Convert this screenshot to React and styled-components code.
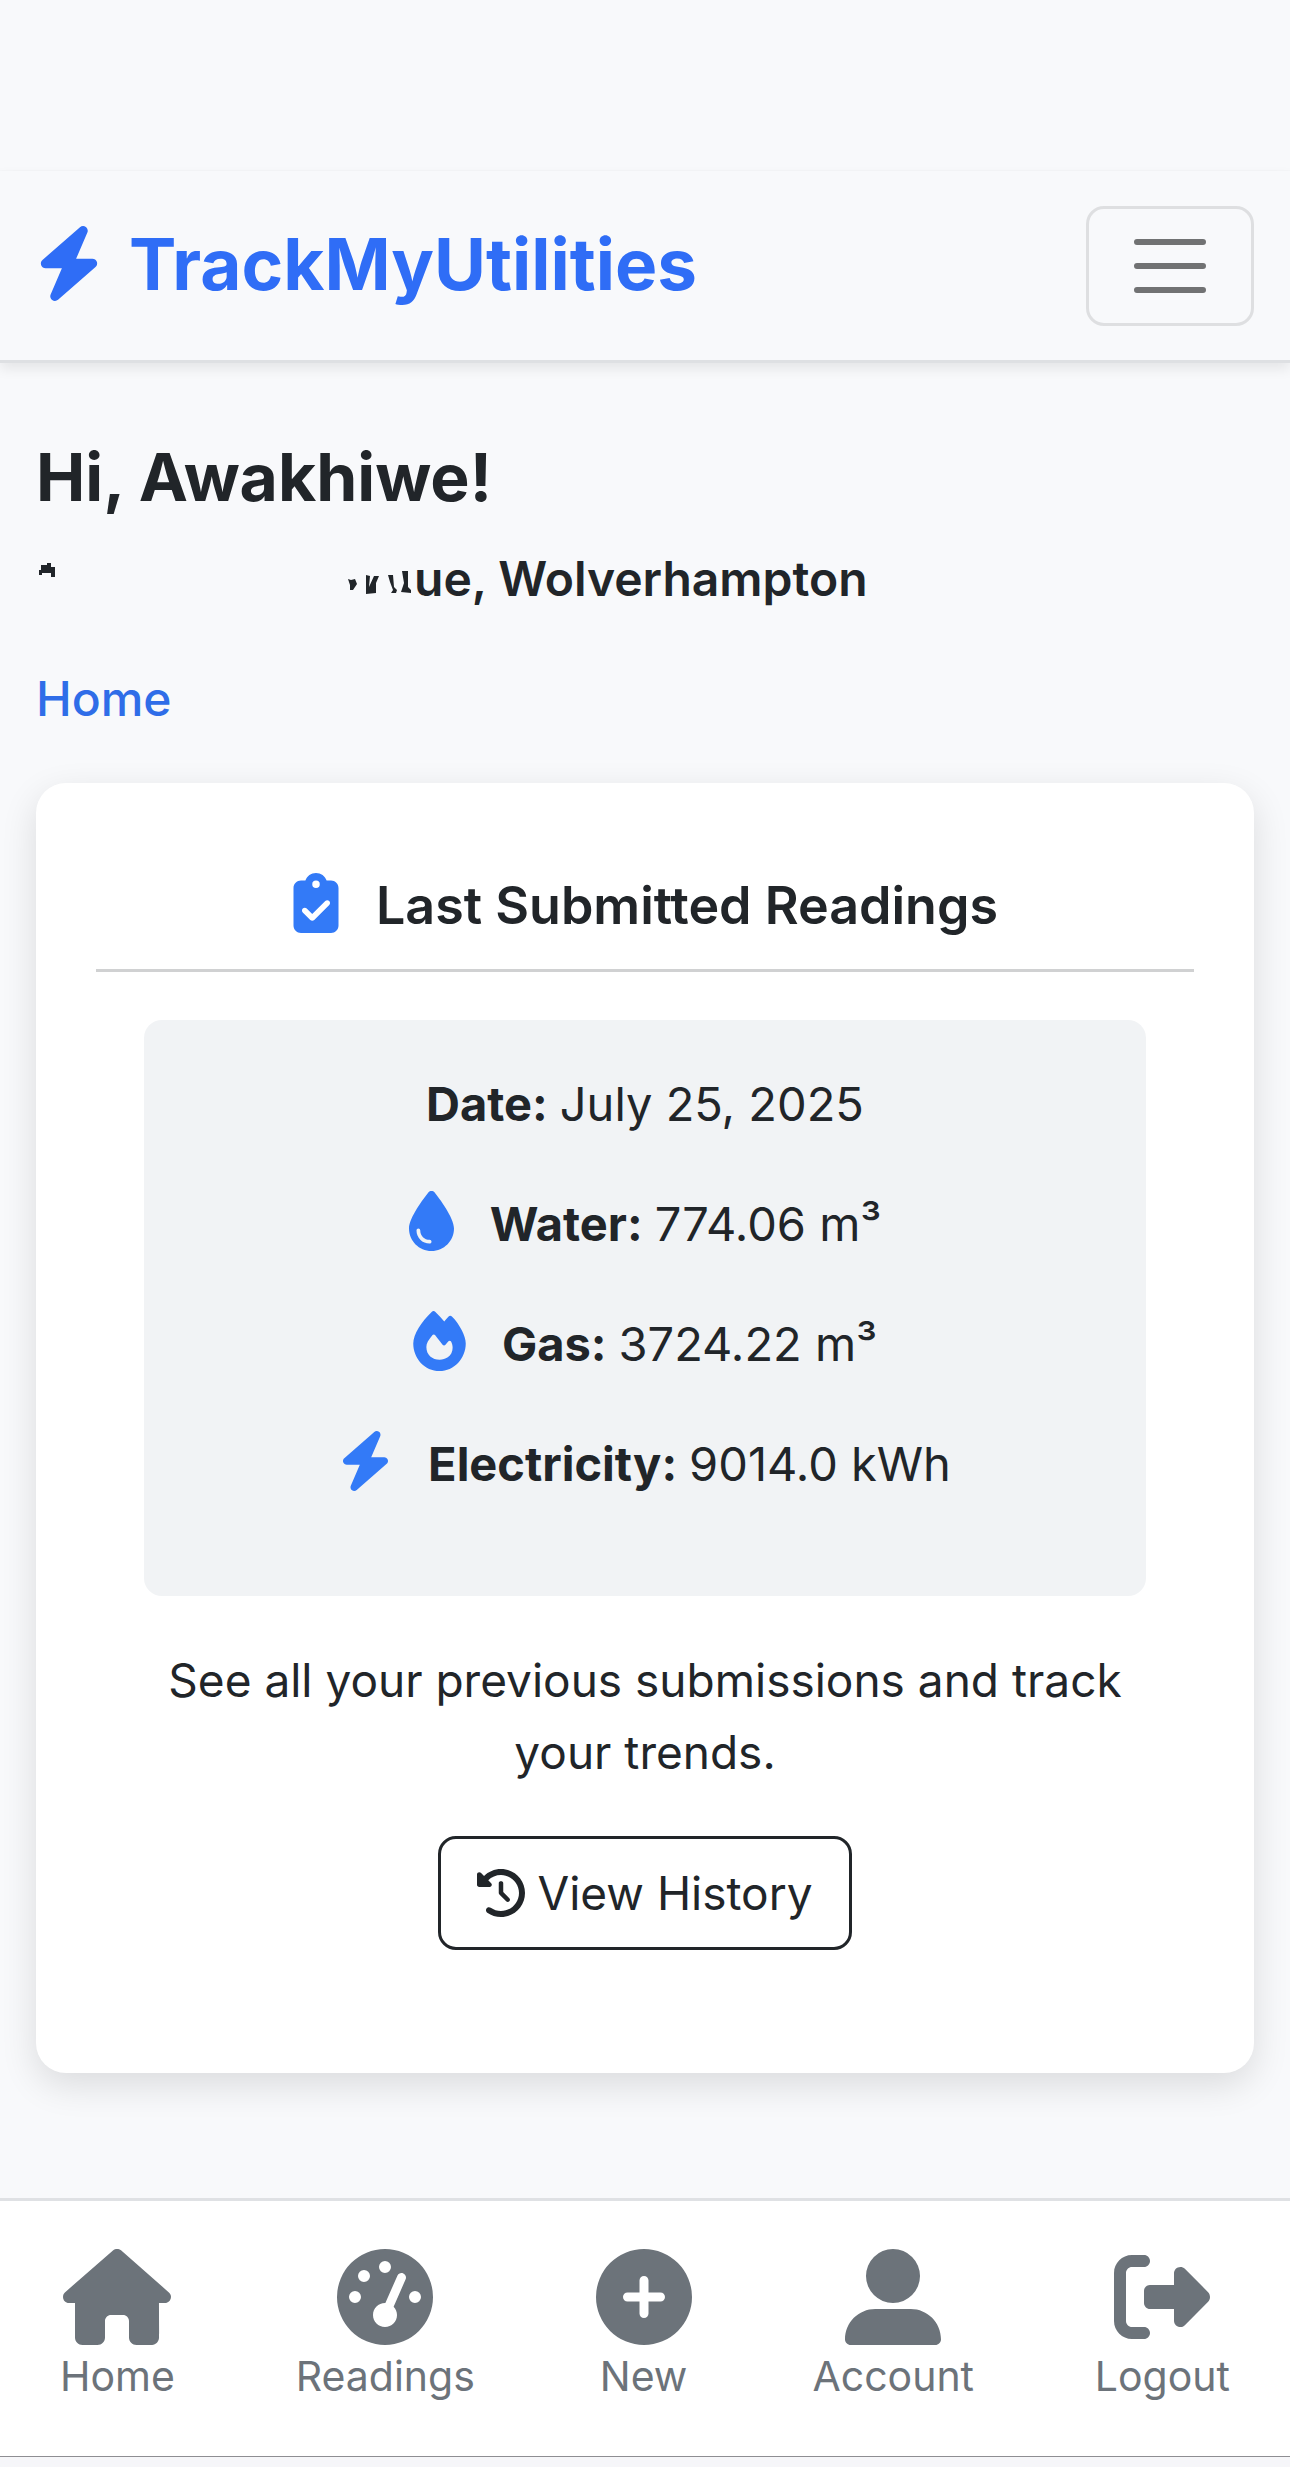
import React from "react"
import styled, {createGlobalStyle, css} from "styled-components"
import {
    FaBolt,
    FaCirclePlus,
    FaClipboardCheck,
    FaClockRotateLeft,
    FaDroplet,
    FaFire,
    FaGaugeHigh,
    FaHouse,
    FaRightFromBracket,
    FaUserLarge
} from "react-icons/fa6"

const GlobalStyle = createGlobalStyle`
    * {
        box-sizing: border-box;
    }

    body {
        margin: 0;
        background: #f8f9fb;
        color: #212529;
        font-family: Inter, "Liberation Sans", sans-serif;
        font-size: 46px;
        line-height: 72px;
    }
`

const Page = styled.div`
    display: flex;
    flex-direction: column;
    min-height: 100vh;
`

const StatusBar = styled.div`
    height: 171px;
    border-bottom: 1px solid #f5f6f8;
`

const TopBar = styled.header`
    display: flex;
    align-items: center;
    justify-content: space-between;
    height: 192px;
    padding: 0 36px;
    background: #f8f9fb;
    border-bottom: 3px solid #dee0e3;
    box-shadow: 0 6px 12px rgba(0, 0, 0, 0.08);
`

const Brand = styled.a`
    display: flex;
    align-items: center;
    gap: 27px;
    padding-bottom: 4px;
    color: #2f6df6;
    font-size: 71px;
    font-weight: 700;
    text-decoration: none;
`

const BrandIcon = styled(FaBolt)`
    width: 66px;
    height: 75px;
`

const MenuButton = styled.button`
    display: flex;
    align-items: center;
    justify-content: center;
    width: 168px;
    height: 120px;
    padding: 0;
    background: none;
    border: 3px solid #dedfe1;
    border-radius: 18px;
`

const MenuIcon = styled.svg`
    width: 90px;
    height: 90px;
    stroke: #717273;
    stroke-width: 2;
    stroke-linecap: round;
`

const Main = styled.main`
    padding: 72px 36px 125px;
`

const Greeting = styled.h1`
    margin: 0;
    font-size: 66px;
    font-weight: 700;
    line-height: 84px;
`

const Address = styled.p`
    display: flex;
    align-items: center;
    margin: 24px 0 48px;
    font-size: 48px;
    font-weight: 600;
`

const AddressMask = styled.svg`
    flex: none;
    width: 378px;
    height: 72px;
    fill: #212529;
`

const Crumb = styled.a`
    display: inline-block;
    color: #2f6de8;
    font-size: 48px;
    font-weight: 500;
    text-decoration: none;
`

const Card = styled.section`
    margin-top: 48px;
    padding: 87px 60px 123px;
    background: #fff;
    border-radius: 30px;
    box-shadow: 0 12px 36px rgba(0, 0, 0, 0.12);
    text-align: center;
`

const CardTitle = styled.h2`
    display: flex;
    align-items: center;
    justify-content: center;
    gap: 36px;
    margin: 0 0 48px;
    padding-bottom: 27px;
    border-bottom: 3px solid #d0d1d2;
    font-size: 52px;
    font-weight: 600;
`

const blueIcon = css`
    flex: none;
    height: 60px;
    margin-bottom: 6px;
    color: #337af7;
`

const TitleIcon = styled(FaClipboardCheck)`
    ${blueIcon}
    width: 48px;
`

const Readings = styled.ul`
    margin: 0 48px 48px;
    padding: 48px 48px 96px;
    background: #f1f3f5;
    border-radius: 18px;
    font-size: 47px;
    list-style: none;
`

const Reading = styled.li`
    display: flex;
    align-items: center;
    justify-content: center;
    gap: 12px;

    & + & {
        margin-top: 48px;
    }

    strong {
        font-weight: 700;
    }
`

const ReadingIcon = styled.svg`
    ${blueIcon}
    width: ${props => props.$width}px;
    margin-right: 24px;
`

const CardText = styled.p`
    margin: 0 48px 48px;
`

const HistoryButton = styled.button`
    display: inline-flex;
    align-items: center;
    gap: 12px;
    height: 114px;
    padding: 0 36px;
    background: none;
    border: 3px solid #212529;
    border-radius: 18px;
    color: inherit;
    font: inherit;

    svg {
        width: 48px;
        height: 48px;
    }
`

const BottomNav = styled.nav`
    display: flex;
    justify-content: space-between;
    flex: 1;
    padding: 48px 60px 0;
    background: #fff;
    border-top: 3px solid #dfe1e4;
`

const NavLink = styled.a`
    display: flex;
    flex-direction: column;
    align-items: center;
    color: #6c737a;
    font-size: 41px;
    line-height: 62px;
    text-decoration: none;

    svg {
        width: ${props => props.$iconWidth}px;
        height: 96px;
    }
`

const HomeEdge = styled.div`
    height: 11px;
    background: #f6f6f9;
    border-top: 1px solid #8e8e93;
`

const readings = [
    {label: "Date", value: "July 25, 2025"},
    {label: "Water", value: "774.06 m³", icon: FaDroplet, width: 45},
    {label: "Gas", value: "3724.22 m³", icon: FaFire, width: 53},
    {label: "Electricity", value: "9014.0 kWh", icon: FaBolt, width: 53}
]

const navItems = [
    {name: "Home", icon: FaHouse, width: 108},
    {name: "Readings", icon: FaGaugeHigh, width: 96},
    {name: "New", icon: FaCirclePlus, width: 96},
    {name: "Account", icon: FaUserLarge, width: 96},
    {name: "Logout", icon: FaRightFromBracket, width: 96}
]

export default function App() {
    return (
        <Page>
            <GlobalStyle />
            <StatusBar />
            <TopBar>
                <Brand href="#">
                    <BrandIcon />
                    TrackMyUtilities
                </Brand>
                <MenuButton aria-label="Toggle navigation">
                    <MenuIcon viewBox="0 0 30 30">
                        <path d="M4 7h22M4 15h22M4 23h22" />
                    </MenuIcon>
                </MenuButton>
            </TopBar>
            <Main>
                <Greeting>Hi, Awakhiwe!</Greeting>
                <Address>
                    {/* what is left of the rubbed-out street */}
                    <AddressMask viewBox="0 0 378 72" aria-hidden="true">
                        <path d="M3 32V27H5V22H11V20H15V24H19V34H15V30H6V32z" />
                        <path d="M312 36L315 37L319 36L321 41L317 47H314V42z" />
                        <path d="M330 32L334 33L333 44L338 33H343L340 40V50L330 51z" />
                        <path d="M352 32H357L358 44L361 47L360 50H355L357 47L354 39z" />
                        <path d="M366 28H372V44L375 47V50L365 49L368 40z" />
                    </AddressMask>
                    ue, Wolverhampton
                </Address>
                <Crumb href="#">Home</Crumb>
                <Card>
                    <CardTitle>
                        <TitleIcon />
                        Last Submitted Readings
                    </CardTitle>
                    <Readings>
                        {readings.map(({label, value, icon, width}) => (
                            <Reading key={label}>
                                {icon && <ReadingIcon as={icon} $width={width} />}
                                <strong>{label}:</strong>
                                <span>{value}</span>
                            </Reading>
                        ))}
                    </Readings>
                    <CardText>
                        See all your previous submissions and track your trends.
                    </CardText>
                    <HistoryButton>
                        <FaClockRotateLeft />
                        View History
                    </HistoryButton>
                </Card>
            </Main>
            <BottomNav>
                {navItems.map(({name, icon: Icon, width}) => (
                    <NavLink key={name} href="#" $iconWidth={width}>
                        <Icon />
                        {name}
                    </NavLink>
                ))}
            </BottomNav>
            <HomeEdge />
        </Page>
    )
}
